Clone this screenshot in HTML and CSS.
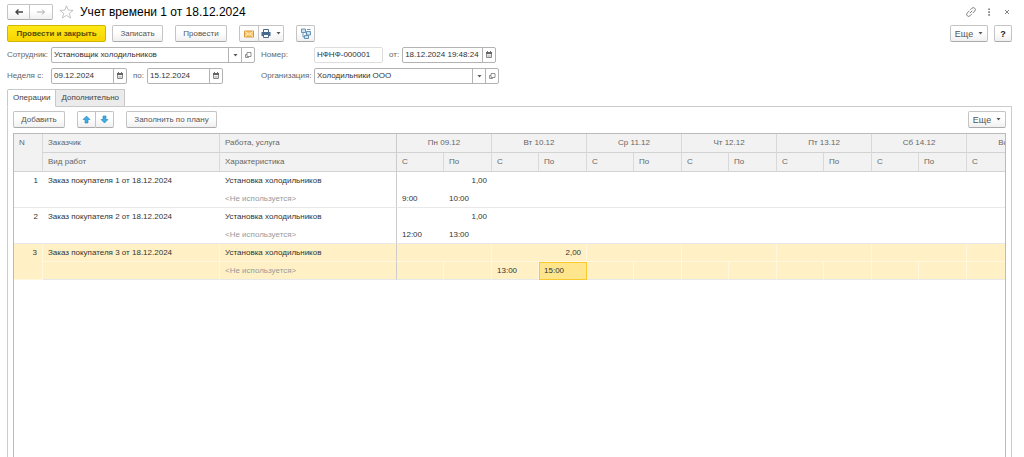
FILE: index.html
```html
<!DOCTYPE html>
<html lang="ru">
<head>
    <meta charset="utf-8">
    <title>Учет времени 1 от 18.12.2024</title>
    <meta name="viewport" content="width=device-width, initial-scale=1">
    <link rel="stylesheet" href="styles.css">
</head>
<body>
    <!-- shared icons -->
    <svg class="sprite" aria-hidden="true">
        <symbol id="i-cal" viewBox="0 0 8 8"><path d="M1.500 1.500h5v5h-5z" fill="#eee" stroke="#888"/><path d="M1 1h6v2H1z" fill="#666"/><path d="M2.500 0v1M5.500 0v1" stroke="#777"/><path d="M2.500 4.500h3M2.500 5.500h3" stroke="#aaa" stroke-width=".5"/></symbol>
        <symbol id="i-open" viewBox="0 0 8 8"><path d="M3 1.500h4v4H3zM3 3.500H1.500v3h3v-1" fill="none" stroke="#777" stroke-width=".8"/></symbol>
        <symbol id="i-down" viewBox="0 0 5 3"><path d="M.5 0h4L2.500 2.500z" fill="#555"/></symbol>
        <symbol id="i-arrow" viewBox="0 0 9 9"><path d="M4.500 1L8 4.500H6V8H3V4.500H1z" fill="#42ade2" stroke="#1b86bd" stroke-width=".6"/></symbol>
    </svg>

    <header class="title-bar">
        <div class="group">
            <button type="button" class="btn nav" aria-label="Назад"><svg width="10" height="8" viewBox="0 0 10 8"><path d="M9 4H2M4.500 1.500L2 4l2.500 2.500" fill="none" stroke="#444" stroke-width="1.400"/></svg></button>
            <button type="button" class="btn nav" aria-label="Вперед"><svg width="10" height="8" viewBox="0 0 10 8"><path d="M1 4H8.500M6 1.500L8.500 4 6 6.500" fill="none" stroke="#aaa"/></svg></button>
        </div>
        <svg class="star" width="15" height="14" viewBox="0 0 15 14"><path d="M7.500.8l1.700 4.300 4.900.3-3.800 3 1.300 4.600-4.100-2.600L3.400 13l1.300-4.600-3.800-3 4.900-.3z" fill="#fff" stroke="#aaa" stroke-width=".7"/></svg>
        <h1>Учет времени 1 от 18.12.2024</h1>
        <div class="window-tools">
            <button type="button" class="plain" aria-label="Ссылка"><svg width="10" height="10" viewBox="0 0 10 10"><g transform="rotate(-45 5 5)" fill="none" stroke="#777" stroke-width=".9"><path d="M4.800 3H1.700a2 2 0 0 0 0 4H4M5.200 7h3.100a2 2 0 0 0 0-4H6M3.200 5h3.600"/></g></svg></button>
            <button type="button" class="plain" aria-label="Меню"><svg width="10" height="10" viewBox="0 0 10 10"><path d="M4.300 1.500h1.600v1.600H4.300zM4.300 4.300h1.600v1.600H4.300zM4.300 7.100h1.600v1.600H4.300z" fill="#777"/></svg></button>
            <button type="button" class="plain" aria-label="Закрыть"><svg width="10" height="10" viewBox="0 0 10 10"><path d="M3 3l4 4M7 3l-4 4" stroke="#777" stroke-width=".9"/></svg></button>
        </div>
    </header>

    <div class="commands">
        <button type="button" class="btn primary">Провести и закрыть</button>
        <button type="button" class="btn write">Записать</button>
        <button type="button" class="btn post">Провести</button>
        <div class="group tools">
            <button type="button" class="btn mail" aria-label="Письмо"><svg width="10" height="8" viewBox="0 0 10 8"><path d="M.5 1h9v6h-9z" fill="#f8c66b" stroke="#d6973a"/><path d="M1 1.500l4 3 4-3M1 6.500l3-2.500M9 6.500L6 4" fill="none" stroke="#fff3cf" stroke-width=".8"/></svg></button>
            <button type="button" class="btn print" aria-label="Печать"><svg width="10" height="9" viewBox="0 0 10 9"><path d="M2.500.5h5v3h-5z" fill="#fff" stroke="#46698e"/><path d="M.5 3h9v4h-9z" fill="#46698e"/><path d="M2.500 5.500h5v3h-5z" fill="#fff" stroke="#46698e"/></svg><svg width="5" height="3"><use href="#i-down"/></svg></button>
        </div>
        <button type="button" class="btn struct" aria-label="Структура подчиненности"><svg width="10" height="11" viewBox="0 0 10 11"><path d="M.5 1h4v3.500h-4zM5.500 3.500h4V7h-4zM3.500 7.500h4v3h-4z" fill="#cde3f1" stroke="#4a7ea5" stroke-width=".8"/><path d="M6 1.500h3.500M2 5v4h1.500M4.500 5h1" fill="none" stroke="#4a7ea5" stroke-width=".8"/></svg></button>
        <button type="button" class="btn more">Еще <svg width="5" height="3"><use href="#i-down"/></svg></button>
        <button type="button" class="btn help">?</button>
    </div>

    <form class="form">
        <label for="employee">Сотрудник:</label>
        <div class="cell">
            <div class="field wide">
                <input type="text" id="employee" value="Установщик холодильников">
                <button type="button" aria-label="Выбрать"><svg width="5" height="3"><use href="#i-down"/></svg></button>
                <button type="button" aria-label="Открыть"><svg width="8" height="8"><use href="#i-open"/></svg></button>
            </div>
        </div>
        <label for="number">Номер:</label>
        <div class="cell">
            <div class="field number"><input type="text" id="number" value="НФНФ-000001"></div>
            <label for="date">от:</label>
            <div class="field datetime">
                <input type="text" id="date" value="18.12.2024 19:48:24">
                <button type="button" aria-label="Календарь"><svg width="8" height="8"><use href="#i-cal"/></svg></button>
            </div>
        </div>

        <label for="from">Неделя с:</label>
        <div class="cell">
            <div class="field date">
                <input type="text" id="from" value="09.12.2024">
                <button type="button" aria-label="Календарь"><svg width="8" height="8"><use href="#i-cal"/></svg></button>
            </div>
            <label for="to">по:</label>
            <div class="field date">
                <input type="text" id="to" value="15.12.2024">
                <button type="button" aria-label="Календарь"><svg width="8" height="8"><use href="#i-cal"/></svg></button>
            </div>
        </div>
        <label for="org">Организация:</label>
        <div class="cell">
            <div class="field org">
                <input type="text" id="org" value="Холодильники ООО">
                <button type="button" aria-label="Выбрать"><svg width="5" height="3"><use href="#i-down"/></svg></button>
                <button type="button" aria-label="Открыть"><svg width="8" height="8"><use href="#i-open"/></svg></button>
            </div>
        </div>
    </form>

    <div class="tabs" role="tablist">
        <button type="button" role="tab" class="tab active" aria-selected="true">Операции</button>
        <button type="button" role="tab" class="tab" aria-selected="false">Дополнительно</button>
    </div>

    <main class="panel">
        <div class="toolbar">
            <button type="button" class="btn add">Добавить</button>
            <div class="group">
                <button type="button" class="btn move" aria-label="Вверх"><svg width="9" height="9"><use href="#i-arrow"/></svg></button>
                <button type="button" class="btn move" aria-label="Вниз"><svg class="flip" width="9" height="9"><use href="#i-arrow"/></svg></button>
            </div>
            <button type="button" class="btn fill">Заполнить по плану</button>
            <button type="button" class="btn more">Еще <svg width="5" height="3"><use href="#i-down"/></svg></button>
        </div>

        <div class="grid">
            <table>
                <colgroup>
                    <col class="c-num"><col class="c-text"><col class="c-text">
                    <col class="c-from"><col class="c-to"><col class="c-from"><col class="c-to">
                    <col class="c-from"><col class="c-to"><col class="c-from"><col class="c-to">
                    <col class="c-from"><col class="c-to"><col class="c-from"><col class="c-to">
                    <col class="c-from"><col class="c-to">
                </colgroup>
                <thead>
                    <tr>
                        <th rowspan="2" class="n">N</th><th>Заказчик</th><th class="edge">Работа, услуга</th>
                        <th colspan="2" class="day">Пн 09.12</th><th colspan="2" class="day">Вт 10.12</th>
                        <th colspan="2" class="day">Ср 11.12</th><th colspan="2" class="day">Чт 12.12</th>
                        <th colspan="2" class="day">Пт 13.12</th><th colspan="2" class="day">Сб 14.12</th>
                        <th colspan="2" class="day">Вс 15.12</th>
                    </tr>
                    <tr>
                        <th>Вид работ</th><th class="edge">Характеристика</th>
                        <th>С</th><th>По</th><th>С</th><th>По</th><th>С</th><th>По</th><th>С</th><th>По</th>
                        <th>С</th><th>По</th><th>С</th><th>По</th><th>С</th><th>По</th>
                    </tr>
                </thead>
                <tbody>
                    <tr>
                        <td rowspan="2" class="n">1</td><td>Заказ покупателя 1 от 18.12.2024</td><td class="edge">Установка холодильников</td>
                        <td colspan="2" class="sum">1,00</td><td colspan="2"></td><td colspan="2"></td><td colspan="2"></td><td colspan="2"></td><td colspan="2"></td><td colspan="2"></td>
                    </tr>
                    <tr>
                        <td></td><td class="edge unused">&lt;Не используется&gt;</td>
                        <td>9:00</td><td>10:00</td><td></td><td></td><td></td><td></td><td></td><td></td><td></td><td></td><td></td><td></td><td></td><td></td>
                    </tr>
                </tbody>
                <tbody>
                    <tr>
                        <td rowspan="2" class="n">2</td><td>Заказ покупателя 2 от 18.12.2024</td><td class="edge">Установка холодильников</td>
                        <td colspan="2" class="sum">1,00</td><td colspan="2"></td><td colspan="2"></td><td colspan="2"></td><td colspan="2"></td><td colspan="2"></td><td colspan="2"></td>
                    </tr>
                    <tr>
                        <td></td><td class="edge unused">&lt;Не используется&gt;</td>
                        <td>12:00</td><td>13:00</td><td></td><td></td><td></td><td></td><td></td><td></td><td></td><td></td><td></td><td></td><td></td><td></td>
                    </tr>
                </tbody>
                <tbody class="selected">
                    <tr>
                        <td rowspan="2" class="n">3</td><td>Заказ покупателя 3 от 18.12.2024</td><td class="edge">Установка холодильников</td>
                        <td colspan="2"></td><td colspan="2" class="sum">2,00</td><td colspan="2"></td><td colspan="2"></td><td colspan="2"></td><td colspan="2"></td><td colspan="2"></td>
                    </tr>
                    <tr>
                        <td></td><td class="edge unused">&lt;Не используется&gt;</td>
                        <td></td><td></td><td>13:00</td><td class="current">15:00</td><td></td><td></td><td></td><td></td><td></td><td></td><td></td><td></td><td></td><td></td>
                    </tr>
                </tbody>
            </table>
        </div>
    </main>
</body>
</html>
```
FILE: styles.css
```css
* { box-sizing: border-box; }
body {
    margin: 0;
    padding: 4px 12px 0 7px;
    height: 100vh;
    display: flex;
    flex-direction: column;
    overflow: hidden;
    background: #fff;
    color: #333;
    font: 8px/10px "Liberation Sans", Arial, sans-serif;
}
button, input { font: inherit; color: inherit; margin: 0; }
svg { display: block; flex: none; }
.sprite { position: absolute; width: 0; height: 0; }

/* buttons */
.btn {
    display: flex;
    align-items: center;
    justify-content: center;
    gap: 5px;
    height: 17px;
    padding: 0;
    border: 1px solid #c4c4c4;
    border-bottom-color: #aaa;
    border-radius: 2px;
    background: linear-gradient(#fff 40%, #f0f0f0);
    color: #555;
    white-space: nowrap;
}
.group { display: flex; }
.group .btn:first-child { border-radius: 2px 0 0 2px; }
.group .btn:last-child { border-left: 0; border-radius: 0 2px 2px 0; }
.primary {
    width: 99px;
    border-color: #d0b400;
    background: linear-gradient(#ffe817, #f7d500);
    color: #594d00;
    font-weight: bold;
}
.plain { border: 0; padding: 0; background: none; }

/* title */
.title-bar { display: flex; align-items: center; height: 16px; margin-bottom: 5px; }
.nav { width: 23px; height: 16px; }
.star { margin: 0 6px; }
h1 { margin: 0; color: #000; font-size: 12px; line-height: 16px; font-weight: normal; }
.window-tools { display: flex; gap: 8px; margin-left: auto; }

.commands { display: flex; gap: 6px; margin-bottom: 5px; }
.write { width: 51px; }
.post { width: 52px; margin-left: 6px; }
.tools { margin: 0 6px; }
.mail { width: 20px; }
.print { width: 25px; }
.struct { width: 19px; }
.more { width: 38px; margin-left: auto; font-size: 9px; }
.help { width: 18px; color: #222; font-size: 9px; font-weight: bold; }

/* form */
.form {
    display: grid;
    grid-template-columns: 44px 210px 53px auto;
    justify-content: start;
    align-items: center;
    row-gap: 5px;
    margin-bottom: 5px;
    color: #666;
}
.form label { white-space: nowrap; }
.cell { display: flex; align-items: center; justify-content: flex-start; }
.cell label { padding: 0 3px 0 6px; }
.field { display: flex; height: 16px; border: 1px solid #b3b3b3; border-radius: 2px; color: #333; }
.field input { flex: 1; min-width: 0; border: 0; padding: 0 2px; background: none; outline: 0; }
.field button {
    display: flex;
    align-items: center;
    justify-content: center;
    width: 13px;
    padding: 0;
    border: 0;
    border-left: 1px solid #b3b3b3;
    background: none;
}
.wide { width: 204px; }
.number { width: 69px; border-color: #ddd; }
.datetime { width: 94px; }
.date { width: 76px; }
.org { width: 185px; }

/* tabs */
.tabs { display: flex; position: relative; margin-bottom: -1px; }
.tab { height: 18px; padding: 0 5px; border: 1px solid #c8c8c8; background: #ebebeb; color: #444; }
.tab + .tab { border-left: 0; }
.active { border-bottom-color: #fff; border-radius: 2px 0 0; background: #fff; }
.panel {
    flex: 1;
    min-height: 0;
    display: flex;
    flex-direction: column;
    padding: 4px 5px 0;
    border: solid #ccc;
    border-width: 1px 1px 0;
}
.toolbar { display: flex; gap: 12px; margin-bottom: 5px; }
.add { width: 52px; }
.move { width: 18px; }
.group .move:first-child { width: 19px; }
.fill { width: 91px; }
.flip { transform: rotate(180deg); }

/* table */
.grid { flex: 1; overflow: hidden; border: solid #bbb; border-width: 1px 1px 0; }
table { width: 1048px; table-layout: fixed; border-collapse: separate; border-spacing: 0; }
.c-num { width: 29px; }
.c-text { width: 177px; }
.c-from { width: 47px; }
.c-to { width: 48px; }
th, td { padding: 0 5px; text-align: left; white-space: nowrap; }
th {
    height: 19px;
    border-right: 1px solid #d9d9d9;
    border-bottom: 1px solid #d2d2d2;
    background: #f2f2f2;
    color: #666;
    font-weight: normal;
}
td { height: 18px; }
th.n { padding-top: 4px; vertical-align: top; }
td.n { padding-top: 4px; text-align: right; vertical-align: top; }
th.day { text-align: center; }
.edge { border-right: 1px solid #ccc; }
.sum { text-align: right; }
.unused { color: #999; }
tbody tr:last-child td, td.n { border-bottom: 1px solid #e8e8e8; }
.selected td { border-right: 1px solid #fff8df; border-bottom: 1px solid #fff8df; background: #fff1c5; }
.selected td.edge { border-right-color: #ccc; }
.selected td.current { border: 1px solid #f9c92e; background: #ffe68d; padding-left: 4px; }
```
